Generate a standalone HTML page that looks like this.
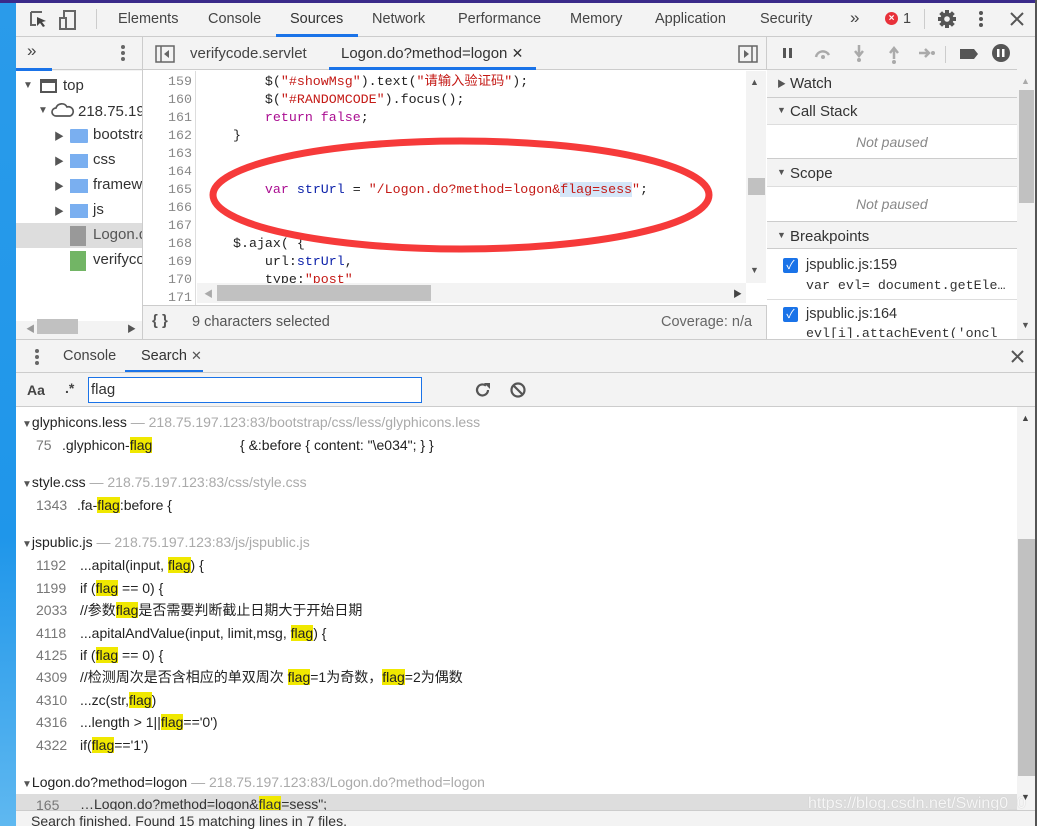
<!DOCTYPE html>
<html><head><meta charset="utf-8"><style>
*{margin:0;padding:0;box-sizing:border-box}
body{width:1037px;height:826px;overflow:hidden;position:relative;background:#fff;font-family:"Liberation Sans","Noto Sans CJK SC",sans-serif;font-size:14px;color:#333}
.a{position:absolute}
.mono{font-family:"Liberation Mono","Noto Sans CJK SC",monospace;font-size:13.3px}
.g{color:#888}
.hl{background:#f0e800}
.tab{position:absolute;top:11px;font-size:14.5px;color:#444}
.ln{position:absolute;left:143px;width:49px;text-align:right;color:#888;line-height:18px;height:18px}
.code{position:absolute;left:201px;white-space:pre;color:#222;line-height:18px;height:18px}
.s{color:#c41a16}.k{color:#aa0d91}.v{color:#1c00cf}.b{color:#0d22aa}
.r{position:absolute;white-space:pre;font-size:14px;color:#222;line-height:18px;height:18px}
.rn{position:absolute;color:#777;font-size:14px;text-align:right;line-height:18px}
</style></head><body>
<div class="a" style="left:0;top:0;width:16px;height:826px;background:linear-gradient(#2a9bea,#1f96ea 65%,#5fb8f0)"></div>
<div class="a" style="left:0;top:0;width:1037px;height:3px;background:#3a2a8a"></div>
<div class="a" style="left:1035px;top:0;width:2px;height:826px;background:#555"></div>

<!-- top toolbar -->
<div class="a" style="left:16px;top:3px;width:1019px;height:34px;background:#f3f3f3;border-bottom:1px solid #ccc"></div>
<svg class="a" style="left:28px;top:9px" width="56" height="22"><path d="M3 3h11M3 3v13h5" fill="none" stroke="#666" stroke-width="2"/><path d="M9 8l9 4-4 1 3 4-2 1-3-4-3 3z" fill="#444"/><rect x="36" y="2" width="11" height="18" fill="none" stroke="#666" stroke-width="2"/><rect x="32" y="9" width="6" height="11" fill="#f3f3f3" stroke="#666" stroke-width="2"/></svg>
<div class="a" style="left:96px;top:9px;width:1px;height:20px;background:#ccc"></div>
<div class="tab" style="left:118px">Elements</div>
<div class="tab" style="left:208px">Console</div>
<div class="tab" style="left:290px;color:#333">Sources</div>
<div class="a" style="left:276px;top:34px;width:82px;height:3px;background:#1a73e8"></div>
<div class="tab" style="left:372px">Network</div>
<div class="tab" style="left:458px">Performance</div>
<div class="tab" style="left:570px">Memory</div>
<div class="tab" style="left:655px">Application</div>
<div class="tab" style="left:760px">Security</div>
<div class="tab" style="left:850px;font-size:17px;top:8px">»</div>
<div class="a" style="left:885px;top:12px;width:13px;height:13px;border-radius:50%;background:#e8313a;color:#fff;font-size:10px;line-height:13px;text-align:center;font-weight:bold">×</div>
<div class="tab" style="left:903px">1</div>
<div class="a" style="left:924px;top:9px;width:1px;height:20px;background:#ccc"></div>
<svg class="a" style="left:937px;top:9px" width="20" height="20"><g fill="#555"><circle cx="10" cy="10" r="6.5"/><rect x="8" y="1" width="4" height="18"/><rect x="1" y="8" width="18" height="4"/><rect x="8" y="1" width="4" height="18" transform="rotate(45 10 10)"/><rect x="8" y="1" width="4" height="18" transform="rotate(-45 10 10)"/></g><circle cx="10" cy="10" r="2.8" fill="#f3f3f3"/></svg>
<svg class="a" style="left:978px;top:10px" width="6" height="18"><circle cx="3" cy="3" r="2" fill="#555"/><circle cx="3" cy="9" r="2" fill="#555"/><circle cx="3" cy="15" r="2" fill="#555"/></svg>
<svg class="a" style="left:1010px;top:12px" width="14" height="14"><path d="M1 1L13 13M13 1L1 13" stroke="#555" stroke-width="2"/></svg>

<!-- navigator -->
<div class="a" style="left:16px;top:37px;width:127px;height:302px;background:#f3f3f3;border-right:1px solid #ccc"></div>
<div class="a" style="left:16px;top:37px;width:127px;height:33px;border-bottom:1px solid #ccc"></div>
<div class="a" style="left:27px;top:41px;font-size:17px;color:#444">»</div>
<div class="a" style="left:16px;top:68px;width:36px;height:3px;background:#1a73e8"></div>
<svg class="a" style="left:120px;top:44px" width="6" height="18"><circle cx="3" cy="3" r="2" fill="#666"/><circle cx="3" cy="9" r="2" fill="#666"/><circle cx="3" cy="15" r="2" fill="#666"/></svg>
<div class="a" style="left:16px;top:71px;width:126px;height:250px;background:#fff"></div>
<div class="a" style="left:16px;top:223px;width:126px;height:25px;background:#ddd"></div>
<div class="a" style="left:23px;top:80px;font-size:10px;color:#555">▼</div>
<div class="a" style="left:40px;top:79px;width:17px;height:14px;border:2px solid #555;border-top-width:4px"></div>
<div class="a" style="left:63px;top:77px;font-size:15px">top</div>
<div class="a" style="left:38px;top:105px;font-size:10px;color:#555">▼</div>
<svg class="a" style="left:51px;top:102px" width="24" height="16"><path d="M5 14a4 4 0 010-8 6 6 0 0111-1 4.5 4.5 0 013 9z" fill="none" stroke="#555" stroke-width="1.7"/></svg>
<div class="a" style="left:78px;top:103px;font-size:15px;white-space:nowrap;width:64px;overflow:hidden">218.75.197</div>
<div class="a" style="left:16px;top:128px;width:126px;height:150px;overflow:hidden">
<div class="a" style="left:38px;top:0;font-size:10px;color:#555">▶</div>
<div class="a" style="left:54px;top:1px;width:18px;height:14px;background:#7aaff0;border-radius:1px"></div>
<div class="a" style="left:77px;top:-2px;font-size:15px">bootstrap</div>
<div class="a" style="left:38px;top:25px;font-size:10px;color:#555">▶</div>
<div class="a" style="left:54px;top:26px;width:18px;height:14px;background:#7aaff0"></div>
<div class="a" style="left:77px;top:23px;font-size:15px">css</div>
<div class="a" style="left:38px;top:50px;font-size:10px;color:#555">▶</div>
<div class="a" style="left:54px;top:51px;width:18px;height:14px;background:#7aaff0"></div>
<div class="a" style="left:77px;top:48px;font-size:15px">framework</div>
<div class="a" style="left:38px;top:75px;font-size:10px;color:#555">▶</div>
<div class="a" style="left:54px;top:76px;width:18px;height:14px;background:#7aaff0"></div>
<div class="a" style="left:77px;top:73px;font-size:15px">js</div>
<div class="a" style="left:54px;top:98px;width:16px;height:20px;background:#999"></div>
<div class="a" style="left:77px;top:98px;font-size:15px;color:#555">Logon.do</div>
<div class="a" style="left:54px;top:123px;width:16px;height:20px;background:#72b565"></div>
<div class="a" style="left:77px;top:123px;font-size:15px">verifycode</div>
</div>
<div class="a" style="left:26px;top:322px;font-size:9px;color:#999">◀</div>
<div class="a" style="left:37px;top:319px;width:41px;height:15px;background:#c1c1c1"></div>
<div class="a" style="left:127px;top:322px;font-size:9px;color:#555">▶</div>

<!-- editor tabs -->
<div class="a" style="left:143px;top:37px;width:624px;height:33px;background:#f3f3f3;border-bottom:1px solid #ccc;border-right:1px solid #ccc"></div>
<svg class="a" style="left:155px;top:45px" width="20" height="18"><rect x="1" y="1" width="18" height="16" fill="none" stroke="#666" stroke-width="1.5"/><path d="M6 1v16" stroke="#666" stroke-width="1.5"/><path d="M14 5l-5 4 5 4z" fill="#666"/></svg>
<div class="a" style="left:190px;top:45px;font-size:15px;color:#444">verifycode.servlet</div>
<div class="a" style="left:341px;top:45px;font-size:15px;color:#333">Logon.do?method=logon <span style="font-size:14px">✕</span></div>
<div class="a" style="left:329px;top:67px;width:207px;height:3px;background:#1a73e8"></div>
<svg class="a" style="left:738px;top:45px" width="20" height="18"><rect x="1" y="1" width="18" height="16" fill="none" stroke="#666" stroke-width="1.5"/><path d="M14 1v16" stroke="#666" stroke-width="1.5"/><path d="M6 5l5 4-5 4z" fill="#666"/></svg>

<!-- code -->
<div class="a" style="left:143px;top:71px;width:53px;height:235px;background:#fff;border-right:1px solid #ddd"></div>
<div class="a mono" style="left:143px;top:71px;width:603px;height:212px;overflow:hidden">
<div style="position:relative">
<div class="ln" style="left:0;top:2px">159</div><div class="ln" style="left:0;top:20px">160</div><div class="ln" style="left:0;top:38px">161</div><div class="ln" style="left:0;top:56px">162</div><div class="ln" style="left:0;top:74px">163</div><div class="ln" style="left:0;top:92px">164</div><div class="ln" style="left:0;top:110px">165</div><div class="ln" style="left:0;top:128px">166</div><div class="ln" style="left:0;top:146px">167</div><div class="ln" style="left:0;top:164px">168</div><div class="ln" style="left:0;top:182px">169</div><div class="ln" style="left:0;top:200px">170</div>
<div class="code" style="left:90px;top:2px">    $(<span class="s">"#showMsg"</span>).text(<span class="s">"请输入验证码"</span>);</div>
<div class="code" style="left:90px;top:20px">    $(<span class="s">"#RANDOMCODE"</span>).focus();</div>
<div class="code" style="left:90px;top:38px">    <span class="k">return false</span>;</div>
<div class="code" style="left:90px;top:56px">}</div>
<div class="code" style="left:90px;top:110px">    <span class="k">var</span> <span class="b">strUrl</span> = <span class="s">"/Logon.do?method=logon&amp;<span style="background:#d4e6f8">flag=sess</span>"</span>;</div>
<div class="code" style="left:90px;top:164px">$.ajax( {</div>
<div class="code" style="left:90px;top:182px">    url:<span class="b">strUrl</span>,</div>
<div class="code" style="left:90px;top:200px">    type:<span class="s">"post"</span></div>
</div></div>
<div class="a mono g" style="left:143px;top:290px;width:49px;text-align:right">171</div>
<div class="a" style="left:197px;top:283px;width:549px;height:20px;background:#f3f3f3"></div>
<div class="a" style="left:204px;top:287px;font-size:9px;color:#aaa">◀</div>
<div class="a" style="left:217px;top:285px;width:214px;height:16px;background:#c1c1c1"></div>
<div class="a" style="left:733px;top:287px;font-size:9px;color:#444">▶</div>
<div class="a" style="left:746px;top:71px;width:20px;height:212px;background:#f3f3f3"></div>
<div class="a" style="left:750px;top:77px;font-size:9px;color:#555">▲</div>
<div class="a" style="left:748px;top:178px;width:17px;height:17px;background:#c1c1c1"></div>
<div class="a" style="left:750px;top:265px;font-size:9px;color:#555">▼</div>
<svg class="a" style="left:0;top:0" width="1037" height="300"><ellipse cx="461" cy="195" rx="248" ry="54" fill="none" stroke="#f63a3a" stroke-width="7"/></svg>

<!-- status -->
<div class="a" style="left:143px;top:305px;width:624px;height:34px;background:#f3f3f3;border-top:1px solid #ccc;border-right:1px solid #ccc"></div>
<div class="a" style="left:152px;top:312px;font-size:15px;font-weight:bold;color:#555">{ }</div>
<div class="a" style="left:192px;top:314px;font-size:14.5px;color:#555">9 characters selected</div>
<div class="a" style="left:661px;top:314px;font-size:14.5px;color:#666">Coverage: n/a</div>

<!-- debugger -->
<div class="a" style="left:767px;top:37px;width:268px;height:302px;background:#f3f3f3"></div>
<div class="a" style="left:767px;top:69px;width:250px;height:1px;background:#ccc"></div>
<svg class="a" style="left:780px;top:43px" width="245" height="22"><rect x="3" y="5" width="3" height="10" fill="#555"/><rect x="9" y="5" width="3" height="10" fill="#555"/><path d="M36 14a7 7 0 0113-2" fill="none" stroke="#aaa" stroke-width="2.5"/><circle cx="43" cy="14" r="2" fill="#aaa"/><path d="M79 2v10M75 8l4 5 4-5" fill="none" stroke="#aaa" stroke-width="2.5"/><circle cx="79" cy="17" r="2" fill="#aaa"/><path d="M114 16V6M110 10l4-5 4 5" fill="none" stroke="#aaa" stroke-width="2.5"/><circle cx="114" cy="19" r="2" fill="#aaa"/><path d="M139 10h9M145 6l4 4-4 4" fill="none" stroke="#aaa" stroke-width="2.5"/><circle cx="153" cy="10" r="2" fill="#aaa"/><rect x="165" y="3" width="1" height="17" fill="#ccc"/><path d="M182 19l10-18M180 6h14l4 5-4 5h-14z" fill="#555"/><circle cx="221" cy="10" r="9" fill="#555"/><rect x="217" y="6" width="2.5" height="8" fill="#fff"/><rect x="222" y="6" width="2.5" height="8" fill="#fff"/></svg>
<div class="a" style="left:767px;top:70px;width:250px;height:28px;border-bottom:1px solid #ccc"></div>
<div class="a" style="left:777px;top:77px;font-size:9px;color:#555">▶</div>
<div class="a" style="left:790px;top:75px;font-size:15px">Watch</div>
<div class="a" style="left:777px;top:105px;font-size:9px;color:#555">▼</div>
<div class="a" style="left:790px;top:103px;font-size:15px">Call Stack</div>
<div class="a" style="left:767px;top:124px;width:250px;height:35px;background:#fff;border-top:1px solid #ddd;border-bottom:1px solid #ccc"></div>
<div class="a" style="left:856px;top:134px;font-size:14px;font-style:italic;color:#888">Not paused</div>
<div class="a" style="left:777px;top:167px;font-size:9px;color:#555">▼</div>
<div class="a" style="left:790px;top:165px;font-size:15px">Scope</div>
<div class="a" style="left:767px;top:186px;width:250px;height:36px;background:#fff;border-top:1px solid #ddd;border-bottom:1px solid #ccc"></div>
<div class="a" style="left:856px;top:196px;font-size:14px;font-style:italic;color:#888">Not paused</div>
<div class="a" style="left:777px;top:230px;font-size:9px;color:#555">▼</div>
<div class="a" style="left:790px;top:228px;font-size:15px">Breakpoints</div>
<div class="a" style="left:767px;top:248px;width:250px;height:91px;background:#fff;border-top:1px solid #ccc"></div>
<div class="a" style="left:767px;top:299px;width:250px;height:1px;background:#ddd"></div>
<div class="a" style="left:783px;top:258px;width:15px;height:15px;background:#1a73e8;border-radius:2px;color:#fff;font-size:12px;line-height:15px;text-align:center">✓</div>
<div class="a" style="left:806px;top:257px;font-size:14.5px">jspublic.js:159</div>
<div class="a mono" style="left:806px;top:278px;white-space:nowrap">var evl= document.getEle…</div>
<div class="a" style="left:783px;top:307px;width:15px;height:15px;background:#1a73e8;border-radius:2px;color:#fff;font-size:12px;line-height:15px;text-align:center">✓</div>
<div class="a" style="left:806px;top:306px;font-size:14.5px">jspublic.js:164</div>
<div class="a" style="left:806px;top:326px;width:210px;height:12px;overflow:hidden"><div class="mono" style="white-space:nowrap">evl[i].attachEvent('oncl</div></div>
<div class="a" style="left:1017px;top:70px;width:18px;height:269px;background:#f3f3f3"></div>
<div class="a" style="left:1021px;top:76px;font-size:9px;color:#aaa">▲</div>
<div class="a" style="left:1019px;top:90px;width:15px;height:113px;background:#c1c1c1"></div>
<div class="a" style="left:1021px;top:320px;font-size:9px;color:#555">▼</div>

<!-- drawer -->
<div class="a" style="left:16px;top:339px;width:1019px;height:34px;background:#f3f3f3;border-top:1px solid #ccc;border-bottom:1px solid #ccc"></div>
<svg class="a" style="left:34px;top:348px" width="6" height="18"><circle cx="3" cy="3" r="2" fill="#666"/><circle cx="3" cy="9" r="2" fill="#666"/><circle cx="3" cy="15" r="2" fill="#666"/></svg>
<div class="a" style="left:63px;top:348px;font-size:14.5px;color:#444">Console</div>
<div class="a" style="left:141px;top:348px;font-size:14.5px">Search <span style="font-size:13px;color:#555">✕</span></div>
<div class="a" style="left:125px;top:370px;width:78px;height:2px;background:#1a73e8"></div>
<svg class="a" style="left:1011px;top:350px" width="13" height="13"><path d="M1 1L12 12M12 1L1 12" stroke="#555" stroke-width="2"/></svg>
<div class="a" style="left:16px;top:373px;width:1019px;height:34px;background:#f3f3f3;border-bottom:1px solid #ccc"></div>
<div class="a" style="left:27px;top:382px;font-size:14px;font-weight:bold;color:#444">Aa</div>
<div class="a" style="left:65px;top:380px;font-size:14px;font-weight:bold;color:#444">.*</div>
<div class="a" style="left:88px;top:377px;width:334px;height:26px;background:#fff;border:1px solid #1a73e8"></div>
<div class="a" style="left:91px;top:381px;font-size:15px">flag</div>
<svg class="a" style="left:474px;top:381px" width="18" height="18"><path d="M14 9a5.5 5.5 0 11-2-4.3" fill="none" stroke="#555" stroke-width="2.2"/><path d="M10 2h6v6z" fill="#555"/></svg>
<svg class="a" style="left:509px;top:381px" width="18" height="18"><circle cx="9" cy="9" r="6.5" fill="none" stroke="#555" stroke-width="2.2"/><path d="M4.5 4.5l9 9" stroke="#555" stroke-width="2.2"/></svg>

<!-- results -->
<div class="a" style="left:16px;top:407px;width:1001px;height:403px;background:#fff"></div>
<div class="a" style="left:16px;top:794px;width:1001px;height:17px;background:#ddd"></div>
<div class="r" style="left:22px;top:413px"><span style="font-size:10px;color:#555">▼</span>glyphicons.less <span style="color:#aaa">— 218.75.197.123:83/bootstrap/css/less/glyphicons.less</span></div>
<div class="rn" style="left:36px;top:436px">75</div>
<div class="r" style="left:62px;top:436px">.glyphicon-<span class="hl">flag</span></div>
<div class="r" style="left:240px;top:436px">{ &amp;:before { content: "\e034"; } }</div>
<div class="r" style="left:22px;top:473px"><span style="font-size:10px;color:#555">▼</span>style.css <span style="color:#aaa">— 218.75.197.123:83/css/style.css</span></div>
<div class="rn" style="left:36px;top:496px">1343</div>
<div class="r" style="left:77px;top:496px">.fa-<span class="hl">flag</span>:before {</div>
<div class="r" style="left:22px;top:533px"><span style="font-size:10px;color:#555">▼</span>jspublic.js <span style="color:#aaa">— 218.75.197.123:83/js/jspublic.js</span></div>
<div class="rn" style="left:36px;top:556px">1192</div><div class="r" style="left:80px;top:556px">...apital(input, <span class="hl">flag</span>) {</div>
<div class="rn" style="left:36px;top:579px">1199</div><div class="r" style="left:80px;top:579px">if (<span class="hl">flag</span> == 0) {</div>
<div class="rn" style="left:36px;top:601px">2033</div><div class="r" style="left:80px;top:601px">//参数<span class="hl">flag</span>是否需要判断截止日期大于开始日期</div>
<div class="rn" style="left:36px;top:624px">4118</div><div class="r" style="left:80px;top:624px">...apitalAndValue(input, limit,msg, <span class="hl">flag</span>) {</div>
<div class="rn" style="left:36px;top:646px">4125</div><div class="r" style="left:80px;top:646px">if (<span class="hl">flag</span> == 0) {</div>
<div class="rn" style="left:36px;top:668px">4309</div><div class="r" style="left:80px;top:668px">//检测周次是否含相应的单双周次 <span class="hl">flag</span>=1为奇数，<span class="hl">flag</span>=2为偶数</div>
<div class="rn" style="left:36px;top:691px">4310</div><div class="r" style="left:80px;top:691px">...zc(str,<span class="hl">flag</span>)</div>
<div class="rn" style="left:36px;top:713px">4316</div><div class="r" style="left:80px;top:713px">...length &gt; 1||<span class="hl">flag</span>=='0')</div>
<div class="rn" style="left:36px;top:736px">4322</div><div class="r" style="left:80px;top:736px">if(<span class="hl">flag</span>=='1')</div>
<div class="r" style="left:22px;top:773px"><span style="font-size:10px;color:#555">▼</span>Logon.do?method=logon <span style="color:#aaa">— 218.75.197.123:83/Logon.do?method=logon</span></div>
<div class="rn" style="left:36px;top:796px;height:14px;overflow:hidden">165</div>
<div class="a" style="left:80px;top:796px;height:14px;overflow:hidden;white-space:nowrap">…Logon.do?method=logon&amp;<span class="hl">flag</span>=sess";</div>
<div class="a" style="left:1017px;top:407px;width:18px;height:403px;background:#f3f3f3"></div>
<div class="a" style="left:1021px;top:413px;font-size:9px;color:#444">▲</div>
<div class="a" style="left:1018px;top:539px;width:17px;height:237px;background:#c1c1c1"></div>
<div class="a" style="left:1021px;top:792px;font-size:9px;color:#444">▼</div>
<div class="a" style="left:808px;top:795px;font-size:16px;color:rgba(255,255,255,.85);text-shadow:0 0 1px #bbb">https://blog.csdn.net/Swing0_0</div>
<div class="a" style="left:16px;top:810px;width:1019px;height:16px;background:#f3f3f3;border-top:1px solid #ccc"></div>
<div class="a" style="left:31px;top:813px;font-size:14px;color:#333">Search finished. Found 15 matching lines in 7 files.</div>
</body></html>
